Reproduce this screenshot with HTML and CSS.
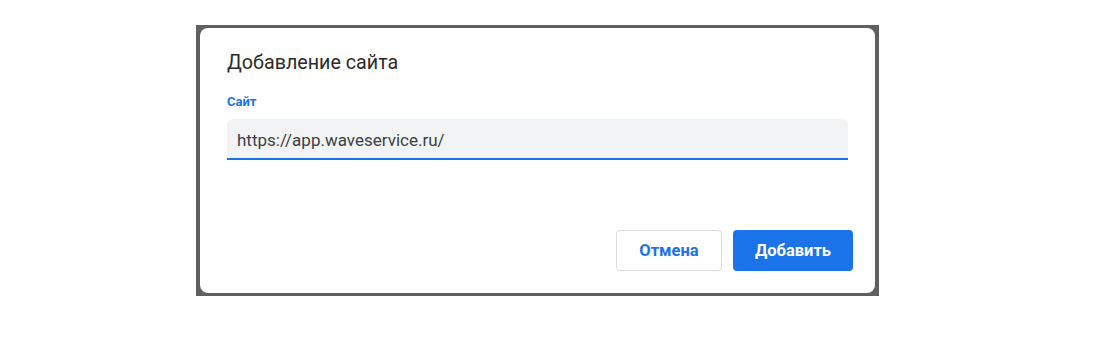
FILE: index.html
```html
<!DOCTYPE html>
<html lang="ru">
<head>
    <meta charset="UTF-8">
    <meta name="viewport" content="width=device-width, initial-scale=1.0">
    <title>Добавление сайта</title>
    <link rel="stylesheet" href="styles.css">
</head>
<body>

    <div class="backdrop">
        <div class="dialog">
            <h2 class="dialog-title">Добавление сайта</h2>

            <label for="site" class="field-label">Сайт</label>
            <input type="text" id="site" class="field-input" value="https://app.waveservice.ru/">

            <div class="actions">
                <button class="btn btn-cancel">Отмена</button>
                <button class="btn btn-primary">Добавить</button>
            </div>
        </div>
    </div>

</body>
</html>
```

FILE: styles.css
```css
body {
    font-family: Roboto, "Noto Sans", Arial, sans-serif;
    background-color: #fff;
    margin: 0;
    padding: 0;
}

.backdrop {
    width: 683px;
    height: 271px;
    margin: 25px 0 0 196px;
    padding: 3px 4px;
    box-sizing: border-box;
    background-color: #5f6061;
}

.dialog {
    height: 100%;
    box-sizing: border-box;
    padding: 22px 27px 22px 27px;
    background-color: #fff;
    border-radius: 8px;
    display: flex;
    flex-direction: column;
}

.dialog-title {
    margin: 0;
    font-size: 19.7px;
    font-weight: 400;
    line-height: 26px;
    color: #2b2b2b;
}

.field-label {
    display: block;
    margin-top: 18px;
    font-size: 13px;
    font-weight: 700;
    line-height: 16px;
    color: #1a73e8;
}

.field-input {
    display: block;
    width: 100%;
    height: 41px;
    margin-top: 9px;
    padding: 2px 10px 0 10px;
    box-sizing: border-box;
    border: none;
    border-bottom: 2px solid #1a73e8;
    border-radius: 6px 6px 0 0;
    background-color: #f1f3f4;
    font-family: inherit;
    font-size: 17px;
    color: #3c4043;
    outline: none;
}

.actions {
    margin-top: auto;
    margin-right: -5px;
    display: flex;
    justify-content: flex-end;
    gap: 11px;
}

.btn {
    height: 41px;
    padding: 0;
    border-radius: 4px;
    font-family: inherit;
    font-size: 16.5px;
    font-weight: 700;
    cursor: pointer;
}

.btn-cancel {
    width: 106px;
    background-color: #fff;
    border: 1px solid #dadce0;
    color: #1a73e8;
}

.btn-primary {
    width: 120px;
    background-color: #1a73e8;
    border: none;
    color: #fff;
}
```
